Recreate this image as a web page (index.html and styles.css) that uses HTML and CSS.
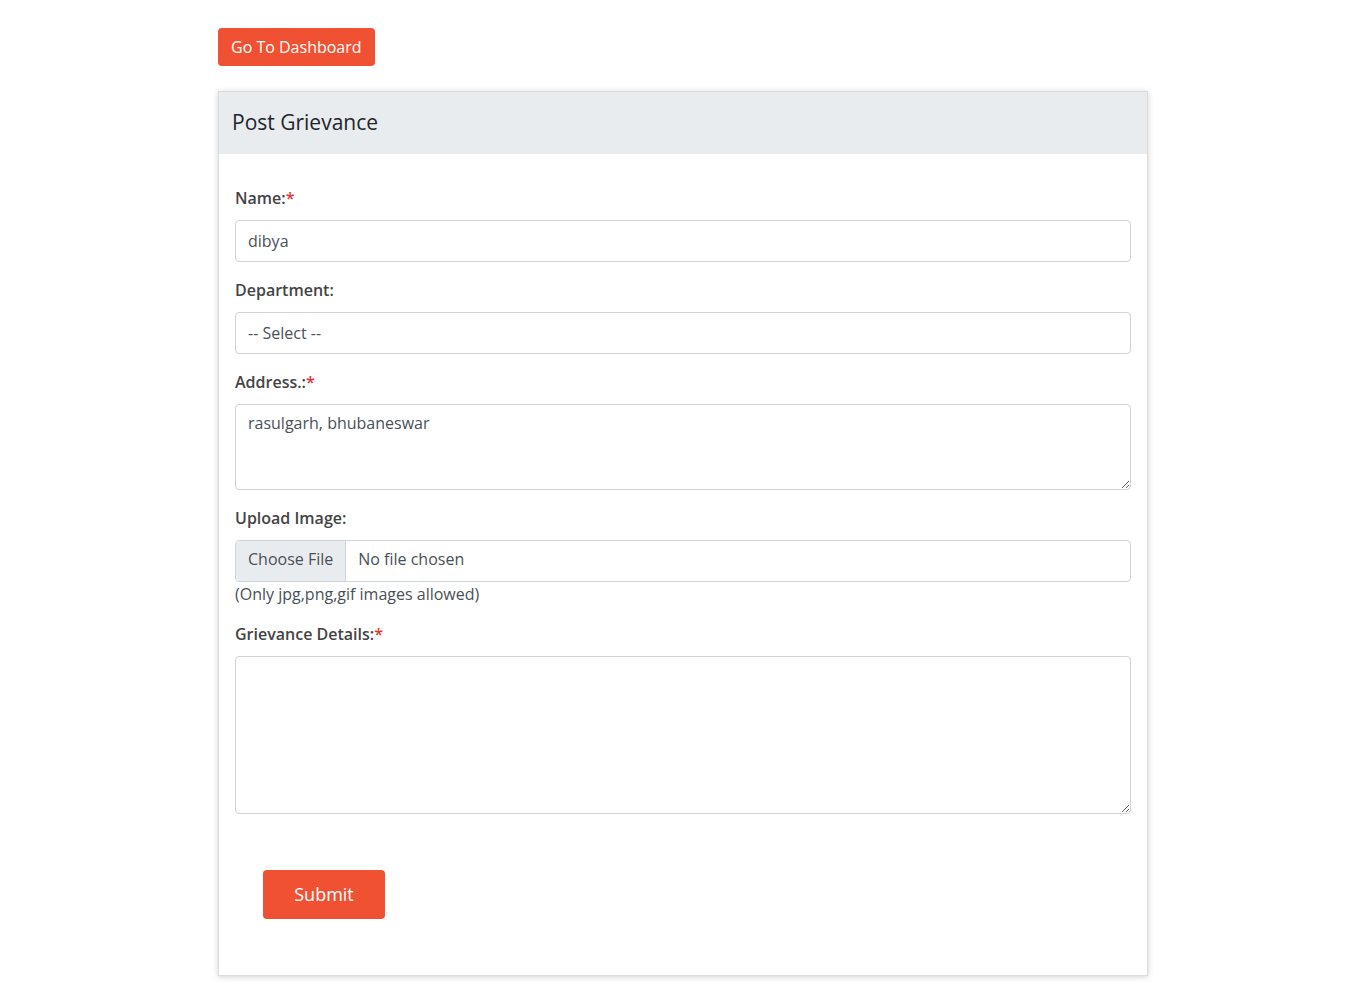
FILE: index.html
```html
<!DOCTYPE html>
<html lang="en">
<head>
<meta charset="utf-8">
<title>Post Grievance</title>
<link rel="stylesheet" href="styles.css">
</head>
<body>
<div class="container">
  <a class="btn btn-top" href="#">Go To Dashboard</a>
  <div class="card">
    <div class="card-header">Post Grievance</div>
    <form class="card-body">
      <div class="group">
        <label class="label">Name:<span class="req">*</span></label>
        <input class="control" type="text" value="dibya">
      </div>
      <div class="group">
        <label class="label">Department:</label>
        <select class="control select"><option>-- Select --</option></select>
      </div>
      <div class="group">
        <label class="label">Address.:<span class="req">*</span></label>
        <textarea class="control area area-sm">rasulgarh, bhubaneswar</textarea>
      </div>
      <div class="group">
        <label class="label">Upload Image:</label>
        <input class="control file" type="file">
        <div class="help">(Only jpg,png,gif images allowed)</div>
      </div>
      <div class="group">
        <label class="label">Grievance Details:<span class="req">*</span></label>
        <textarea class="control area area-lg"></textarea>
      </div>
      <div class="actions">
        <button class="btn btn-submit" type="button">Submit</button>
      </div>
    </form>
  </div>
</div>
</body>
</html>
```
FILE: styles.css
```css
* { box-sizing: border-box; }
body {
  margin: 0;
  background: #fff;
  font-family: "Open Sans", "Liberation Sans", sans-serif;
  font-size: 16px;
  line-height: 1.5;
  color: #212529;
}
.container {
  width: 930px;
  margin: 0 auto;
  padding-top: 28px;
  padding-bottom: 16px;
}
.btn {
  display: inline-block;
  background: #f05133;
  color: #fff;
  border: 0;
  border-radius: 4px;
  text-decoration: none;
  font-family: inherit;
  cursor: pointer;
}
.btn-top {
  height: 38px;
  padding: 7px 13px;
  font-size: 16px;
  line-height: 24px;
}
.card {
  margin-top: 25px;
  border: 1px solid #dcdcdc;
  box-shadow: 0 1px 6px rgba(0, 0, 0, 0.18);
  background: #fff;
}
.card-header {
  background: #e9ecef;
  height: 62px;
  padding: 14px 13px 16px;
  font-size: 21px;
  line-height: 32px;
  color: #212529;
}
.card-body {
  display: block;
  padding: 32px 16px 56px 16px;
}
.group { margin-bottom: 16px; }
.label {
  display: block;
  font-weight: 600;
  color: #444;
  margin-bottom: 10px;
  line-height: 24px;
}
.req { color: #e3342f; }
.control {
  display: block;
  width: 100%;
  height: 42px;
  padding: 8px 12px;
  font-family: inherit;
  font-size: 16px;
  line-height: 24px;
  color: #495057;
  background: #fff;
  border: 1px solid #ced4da;
  border-radius: 4px;
  outline: none;
}
.select {
  appearance: none;
  -webkit-appearance: none;
}
.area { padding: 6px 12px; resize: vertical; }
.area-sm { height: 86px; }
.area-lg { height: 158px; }
.file { padding: 6px 12px 10px; }
.file::file-selector-button {
  height: 40px;
  margin: -6px 12px -10px -12px;
  padding: 6px 12px 10px;
  font-family: inherit;
  font-size: 16px;
  color: #495057;
  background: #e9ecef;
  border: 0;
  border-right: 1px solid #ced4da;
  border-radius: 0;
}
.help {
  color: #495057;
  line-height: 24px;
}
.actions { padding: 40px 0 0 28px; }
.btn-submit {
  height: 49px;
  width: 122px;
  font-size: 18px;
  line-height: 27px;
  padding: 11px 16px;
}
```
